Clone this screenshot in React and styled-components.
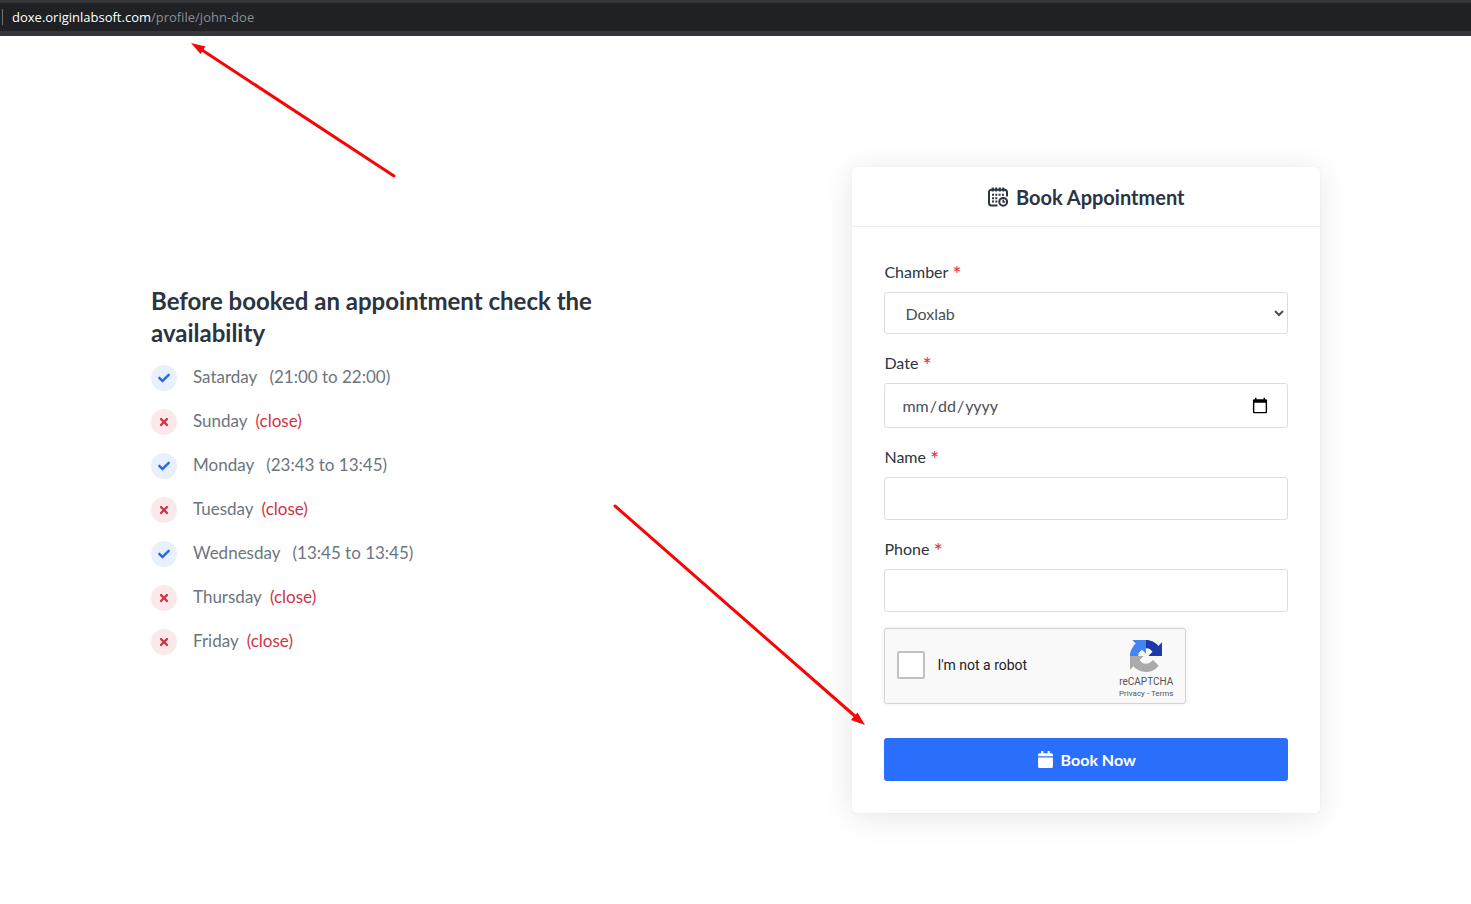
import React from 'react';
import styled, { createGlobalStyle } from 'styled-components';
import { FaCalendar, FaCheck, FaTimes } from 'react-icons/fa';

const GlobalStyle = createGlobalStyle`
  *, *::before, *::after { box-sizing: border-box; }
  body {
    margin: 0;
    background: #fff;
    color: #2b343f;
    font-family: Lato, "Liberation Sans", sans-serif;
    font-size: 16px;
  }
  input, select, button { font-family: inherit; }
`;

const Page = styled.div`
  position: relative;
  overflow: hidden;
  min-height: 100vh;
`;

const AddressBar = styled.header`
  display: flex;
  align-items: center;
  height: 36px;
  border-top: 3px solid #35363a;
  border-bottom: 5px solid #35363a;
  background: #202124;
  font-family: "Open Sans", "Noto Sans", sans-serif;
  font-size: 13px;
  line-height: 18px;
  color: #8b8d90;
`;

const Divider = styled.span`
  width: 1px;
  height: 16px;
  margin: 0 9px 0 2px;
  background: #6b6d70;
`;

const Host = styled.span`
  color: #fff;
`;

const Section = styled.main`
  display: flex;
  align-items: center;
  justify-content: space-between;
  max-width: 1169px;
  margin: 0 auto;
  padding: 131px 0 80px;
`;

const Column = styled.section`
  width: 40%;
`;

const Availability = styled(Column)`
  padding: 0 0 40px;
`;

const Heading = styled.h2`
  margin: 0 0 16px;
  font-size: 24px;
  font-weight: 700;
  line-height: 32px;
`;

const DayList = styled.ul`
  display: flex;
  flex-direction: column;
  gap: 18px;
  margin: 0;
  padding: 0;
  list-style: none;
`;

const DayRow = styled.li`
  display: flex;
  align-items: center;
  height: 26px;
  font-size: 17px;
  line-height: 24px;
  color: #6c757d;
`;

const StatusDot = styled.span`
  display: grid;
  place-items: center;
  width: 26px;
  height: 26px;
  margin-right: 16px;
  border-radius: 50%;
  background: ${(p) => (p.$open ? '#e8effd' : '#fae8ea')};
  color: ${(p) => (p.$open ? '#2a66ee' : '#cf3341')};
`;

const DayText = styled.span`
  padding-bottom: 2px;
`;

const Hours = styled.span`
  margin-left: ${(p) => (p.$open ? 12 : 8)}px;
  color: ${(p) => (p.$open ? 'inherit' : '#cf3341')};
`;

const Card = styled(Column)`
  border-radius: 4px;
  background: #fff;
  box-shadow: 0 0 1px rgba(0, 0, 0, 0.15), 0 4px 32px rgba(0, 0, 0, 0.1);
`;

const CardHeader = styled.h3`
  display: flex;
  align-items: center;
  justify-content: center;
  gap: 8px;
  height: 60px;
  margin: 0;
  border-bottom: 1px solid #ececee;
  font-size: 20px;
  font-weight: 700;
`;

const Form = styled.form`
  display: flex;
  flex-direction: column;
  gap: 16px;
  padding: 32px;
`;

const Field = styled.div`
  display: flex;
  flex-direction: column;
  gap: 8px;
`;

const Label = styled.label`
  height: 25px;
  line-height: 25px;
`;

const Required = styled.span`
  color: #dc3545;
  font-size: 22px;
  line-height: 20px;
  vertical-align: -4px;
`;

const Input = styled.input`
  width: 100%;
  height: ${(p) => (p.type === 'date' ? 45 : 43)}px;
  padding: 0 16px;
  border: 1px solid #dcdddf;
  border-radius: 3px;
  background: #fff;
  color: #495057;
  font-size: 16px;

  &::-webkit-calendar-picker-indicator {
    width: 18px;
    height: 18px;
  }
`;

const Select = styled.select`
  width: 100%;
  height: 42px;
  padding: 0 16px;
  border: 1px solid #dcdddf;
  border-radius: 3px;
  background: #fff;
  color: #495057;
  font-size: 16px;
`;

const Captcha = styled.div`
  display: flex;
  align-items: center;
  width: 302px;
  height: 76px;
  margin-bottom: 18px;
  padding: 0 12px 3px;
  border: 1px solid #d3d3d3;
  border-radius: 3px;
  background: #f9f9f9;
  box-shadow: 0 0 4px rgba(0, 0, 0, 0.08);
  font-family: Roboto, "Liberation Sans", sans-serif;
`;

const CaptchaBox = styled.input`
  appearance: none;
  width: 28px;
  height: 28px;
  margin: 0 12px 0 0;
  border: 2px solid #c1c1c1;
  border-radius: 2px;
  background: #fff;
`;

const CaptchaLabel = styled.label`
  flex: 1;
  color: #222;
  font-size: 14px;
  line-height: 18px;
`;

const CaptchaBrand = styled.div`
  display: flex;
  flex-direction: column;
  align-items: center;
  padding-top: 11px;
  color: #555;
  font-size: 10px;
  line-height: 13px;
`;

const BrandName = styled.span`
  margin-top: 3px;
`;

const LegalLinks = styled.span`
  font-size: 8px;
  line-height: 12px;
`;

const LegalLink = styled.a`
  color: inherit;
  text-decoration: none;
`;

const SubmitButton = styled.button`
  display: flex;
  align-items: center;
  justify-content: center;
  gap: 7px;
  height: 43px;
  border: 0;
  border-radius: 3px;
  background: #2a6ffb;
  color: #fff;
  font-size: 16px;
  font-weight: 700;
`;

const Pointers = styled.svg`
  position: absolute;
  top: 0;
  left: 0;
  overflow: visible;
  pointer-events: none;
`;

const days = [
  { name: 'Satarday', hours: '21:00 to 22:00' },
  { name: 'Sunday' },
  { name: 'Monday', hours: '23:43 to 13:45' },
  { name: 'Tuesday' },
  { name: 'Wednesday', hours: '13:45 to 13:45' },
  { name: 'Thursday' },
  { name: 'Friday' },
];

function CalendarClock() {
  return (
    <svg width="20" height="20" viewBox="0 0 20 20" fill="none" stroke="currentColor" aria-hidden="true">
      <path d="M9.500 18.500H3.500C2 18.500 1 17.500 1 16V5.200C1 3.700 2 2.700 3.500 2.700h13C18 2.700 19 3.700 19 5.200V9.500" strokeWidth="2" />
      <path d="M4.700 .5v4M8.200 .5v4M11.800 .5v4M15.300 .5v4" strokeWidth="2" />
      <path d="M4 7.800h2M7.300 7.800h2M10.600 7.800h2M13.900 7.800h2M4 11.200h2M7.300 11.200h2M4 14.600h2M7.300 14.600h2" strokeWidth="2" />
      <circle cx="15.200" cy="14.800" r="3.900" strokeWidth="2" />
      <path d="M15.200 12.500V15h2" strokeWidth="1.500" />
    </svg>
  );
}

function RecaptchaLogo() {
  return (
    <svg width="32" height="32" viewBox="0 0 64 64" aria-hidden="true">
      <path fill="#1c3aa9" d="M64 31.955l-.033-1.37V4.687l-7.16 7.16C50.948 4.674 42.033.093 32.05.093c-10.4 0-19.622 4.96-25.458 12.64l11.736 11.86a15.55 15.55 0 0 1 4.754-5.334c2.05-1.6 4.952-2.906 8.968-2.906.485 0 .86.057 1.135.163 4.976.393 9.288 3.14 11.828 7.124l-8.307 8.307L64 31.953" />
      <path fill="#4285f4" d="M31.862.094l-1.37.033H4.594l7.16 7.16C4.58 13.147 0 22.06 0 32.046c0 10.4 4.96 19.622 12.64 25.458L24.5 45.768a15.55 15.55 0 0 1-5.334-4.754c-1.6-2.05-2.906-4.952-2.906-8.968 0-.485.057-.86.163-1.135.393-4.976 3.14-9.288 7.124-11.828l8.307 8.307L31.86.095" />
      <path fill="#ababab" d="M.001 32.045l.033 1.37v25.898l7.16-7.16c5.86 7.173 14.774 11.754 24.76 11.754 10.4 0 19.622-4.96 25.458-12.64l-11.736-11.86a15.55 15.55 0 0 1-4.754 5.334c-2.05 1.6-4.952 2.906-8.968 2.906-.485 0-.86-.057-1.135-.163-4.976-.393-9.288-3.14-11.828-7.124l8.307-8.307c-10.522.04-22.4.066-27.295-.005" />
    </svg>
  );
}

function FormField({ id, label, children }) {
  return (
    <Field>
      <Label htmlFor={id}>
        {label} <Required>*</Required>
      </Label>
      {children}
    </Field>
  );
}

export default function App() {
  return (
    <Page>
      <GlobalStyle />
      <AddressBar>
        <Divider />
        <Host>doxe.originlabsoft.com</Host>/profile/john-doe
      </AddressBar>

      <Section>
        <Availability>
          <Heading>Before booked an appointment check the availability</Heading>
          <DayList>
            {days.map(({ name, hours }) => (
              <DayRow key={name}>
                <StatusDot $open={!!hours}>{hours ? <FaCheck size={12} /> : <FaTimes size={12} />}</StatusDot>
                <DayText>
                  {name}
                  <Hours $open={!!hours}>({hours || 'close'})</Hours>
                </DayText>
              </DayRow>
            ))}
          </DayList>
        </Availability>

        <Card>
          <CardHeader>
            <CalendarClock />
            Book Appointment
          </CardHeader>
          <Form onSubmit={(e) => e.preventDefault()}>
            <FormField id="chamber" label="Chamber">
              <Select id="chamber">
                <option>Doxlab</option>
              </Select>
            </FormField>
            <FormField id="date" label="Date">
              <Input id="date" type="date" />
            </FormField>
            <FormField id="name" label="Name">
              <Input id="name" type="text" />
            </FormField>
            <FormField id="phone" label="Phone">
              <Input id="phone" type="tel" />
            </FormField>
            <Captcha>
              <CaptchaBox id="robot" type="checkbox" />
              <CaptchaLabel htmlFor="robot">I'm not a robot</CaptchaLabel>
              <CaptchaBrand>
                <RecaptchaLogo />
                <BrandName>reCAPTCHA</BrandName>
                <LegalLinks>
                  <LegalLink href="#privacy">Privacy</LegalLink> - <LegalLink href="#terms">Terms</LegalLink>
                </LegalLinks>
              </CaptchaBrand>
            </Captcha>
            <SubmitButton type="submit">
              <FaCalendar size={17} />
              Book Now
            </SubmitButton>
          </Form>
        </Card>
      </Section>

      <Pointers width="880" height="740" fill="#f60606" stroke="#f60606" aria-hidden="true">
        <path d="M394 176L202 50M615 506L856 717" strokeWidth="3" strokeLinecap="round" />
        <path d="M191 43l14.500 3.500-5 7.500zM865 725l-14-5 6.500-7.500z" stroke="none" />
      </Pointers>
    </Page>
  );
}
